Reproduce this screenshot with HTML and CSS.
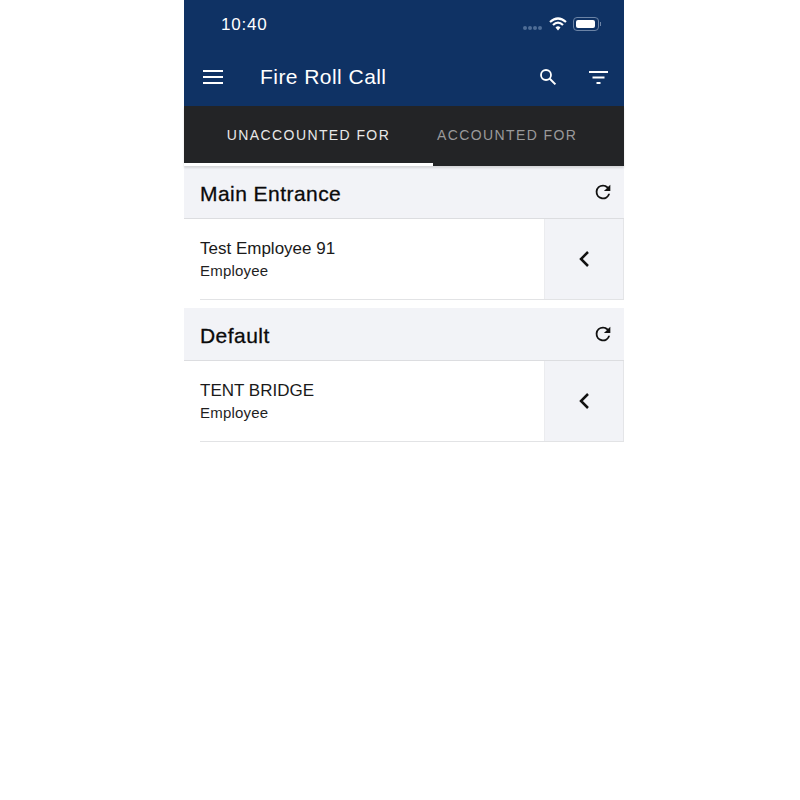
FILE: index.html
```html
<!DOCTYPE html>
<html lang="en">

<head>
    <meta charset="UTF-8">
    <meta name="viewport" content="width=device-width, initial-scale=1.0">
    <title>Fire Roll Call</title>
    <link rel="stylesheet" href="styles.css">
</head>

<body>
    <div class="phone">
        <header class="topbar">
            <div class="status">
                <span class="time">10:40</span>
                <div class="status-icons">
                    <div class="signal"><i></i><i></i><i></i><i></i></div>
                    <svg class="wifi" width="18" height="14" viewBox="0 0 18 14">
                        <path d="M1 5 Q9 -2 17 5" fill="none" stroke="#fff" stroke-width="2.2" />
                        <path d="M4 8 Q9 3 14 8" fill="none" stroke="#fff" stroke-width="2.2" />
                        <path d="M6.5 10.5 Q9 8 11.5 10.5 L9 13.5 Z" fill="#fff" />
                    </svg>
                    <div class="battery"><div class="battery-fill"></div></div>
                    <div class="battery-tip"></div>
                </div>
            </div>
            <div class="nav">
                <svg class="menu-icon" width="20" height="14" viewBox="0 0 20 14">
                    <path d="M0 1H20M0 7H20M0 13H20" stroke="#fff" stroke-width="1.8" />
                </svg>
                <h1>Fire Roll Call</h1>
                <svg class="search-icon" width="18" height="18" viewBox="0 0 18 18">
                    <circle cx="7" cy="7" r="5" fill="none" stroke="#fff" stroke-width="1.8" />
                    <path d="M10.8 10.8L16.4 16.4" stroke="#fff" stroke-width="2" />
                </svg>
                <svg class="filter-icon" width="19" height="13" viewBox="0 0 19 13">
                    <path d="M0 1H19M3.5 6.5H15.5M7.5 12H11.5" stroke="#fff" stroke-width="2" />
                </svg>
            </div>
        </header>

        <nav class="tabs">
            <div class="tab active">UNACCOUNTED FOR</div>
            <div class="tab">ACCOUNTED FOR</div>
        </nav>

        <section class="group">
            <div class="group-head">
                <h2>Main Entrance</h2>
                <svg class="refresh" width="22" height="22" viewBox="0 0 24 24">
                    <path d="M17.65 6.35A7.96 7.96 0 0 0 12 4a8 8 0 1 0 7.73 10h-2.08A6 6 0 1 1 12 6c1.66 0 3.14.69 4.22 1.78L13 11h7V4l-2.35 2.35z" fill="#111" />
                </svg>
            </div>
            <div class="row">
                <div class="row-text">
                    <div class="name">Test Employee 91</div>
                    <div class="role">Employee</div>
                </div>
                <div class="row-action">
                    <svg width="12" height="18" viewBox="0 0 12 18">
                        <path d="M10 2L3 9L10 16" fill="none" stroke="#111" stroke-width="2.5" />
                    </svg>
                </div>
            </div>
        </section>

        <section class="group">
            <div class="group-head">
                <h2>Default</h2>
                <svg class="refresh" width="22" height="22" viewBox="0 0 24 24">
                    <path d="M17.65 6.35A7.96 7.96 0 0 0 12 4a8 8 0 1 0 7.73 10h-2.08A6 6 0 1 1 12 6c1.66 0 3.14.69 4.22 1.78L13 11h7V4l-2.35 2.35z" fill="#111" />
                </svg>
            </div>
            <div class="row">
                <div class="row-text">
                    <div class="name">TENT BRIDGE</div>
                    <div class="role">Employee</div>
                </div>
                <div class="row-action">
                    <svg width="12" height="18" viewBox="0 0 12 18">
                        <path d="M10 2L3 9L10 16" fill="none" stroke="#111" stroke-width="2.5" />
                    </svg>
                </div>
            </div>
        </section>
    </div>
</body>

</html>
```

FILE: styles.css
```css
body {
    margin: 0;
    background-color: #fff;
    font-family: "Liberation Sans", Arial, sans-serif;
}

.phone {
    width: 440px;
    margin-left: 184px;
}

.topbar {
    height: 106px;
    background-color: #0f3264;
    color: #fff;
}

.status {
    height: 48px;
    display: flex;
    align-items: center;
    justify-content: space-between;
    padding: 0 23px 0 37px;
}

.time {
    padding-top: 1px;
    font-size: 17px;
    letter-spacing: 0.8px;
}

.status-icons {
    display: flex;
    align-items: center;
}

.signal {
    display: flex;
    gap: 1px;
    margin: 8px 7px 0 0;
}

.signal i {
    width: 4px;
    height: 4px;
    border-radius: 50%;
    background-color: #4f6d96;
}

.wifi {
    margin-right: 6px;
}

.battery {
    width: 26px;
    height: 14px;
    box-sizing: border-box;
    padding: 2px;
    border: 1px solid #6c84a6;
    border-radius: 4px;
}

.battery-fill {
    width: 19px;
    height: 100%;
    background-color: #fff;
    border-radius: 2px;
}

.battery-tip {
    width: 1px;
    height: 4px;
    margin-left: 1px;
    background-color: #6c84a6;
}

.nav {
    display: flex;
    align-items: center;
    height: 58px;
    padding: 0 16px 0 19px;
}

.nav h1 {
    flex: 1;
    margin: 0 0 0 37px;
    font-size: 21px;
    font-weight: normal;
    letter-spacing: 0.45px;
}

.search-icon {
    margin-right: 32px;
}

.tabs {
    position: relative;
    display: flex;
    height: 60px;
    background-color: #232426;
    font-size: 14px;
    letter-spacing: 1.4px;
    box-shadow: 0 2px 2px rgba(0, 0, 0, 0.12);
}

.tab {
    display: flex;
    align-items: center;
    box-sizing: border-box;
    flex: 1;
    padding: 0 0 2px 4px;
    color: #9a9a9b;
}

.tab.active {
    flex: none;
    justify-content: center;
    width: 249px;
    padding: 0;
    color: #e8e8e8;
    border-bottom: 3px solid #fff;
}

.group {
    margin-bottom: 8px;
}

.group-head {
    display: flex;
    align-items: center;
    justify-content: space-between;
    box-sizing: border-box;
    height: 53px;
    padding: 0 10px 0 16px;
    background-color: #f2f3f7;
    border-bottom: 1px solid #dcdde0;
}

.group-head h2 {
    margin: 0;
    padding-top: 3px;
    font-size: 21px;
    font-weight: normal;
    letter-spacing: 0.45px;
    color: #0a0a0a;
    -webkit-text-stroke: 0.3px #0a0a0a;
}

.refresh {
    margin-bottom: 1px;
}

.row {
    display: flex;
    height: 81px;
    margin-left: 16px;
    box-sizing: border-box;
    border-bottom: 1px solid #e2e3e5;
}

.row-text {
    flex: 1;
    padding-top: 20px;
}

.name {
    font-size: 17px;
    color: #1a1a1a;
}

.role {
    margin-top: 3px;
    font-size: 15px;
    letter-spacing: 0.2px;
    color: #1f1f1f;
}

.row-action {
    display: flex;
    align-items: center;
    justify-content: center;
    box-sizing: border-box;
    width: 80px;
    padding-right: 2px;
    background-color: #f2f3f7;
    border-left: 1px solid #ebecef;
    box-shadow: inset -1px 0 0 #e4e5e8;
}
```
